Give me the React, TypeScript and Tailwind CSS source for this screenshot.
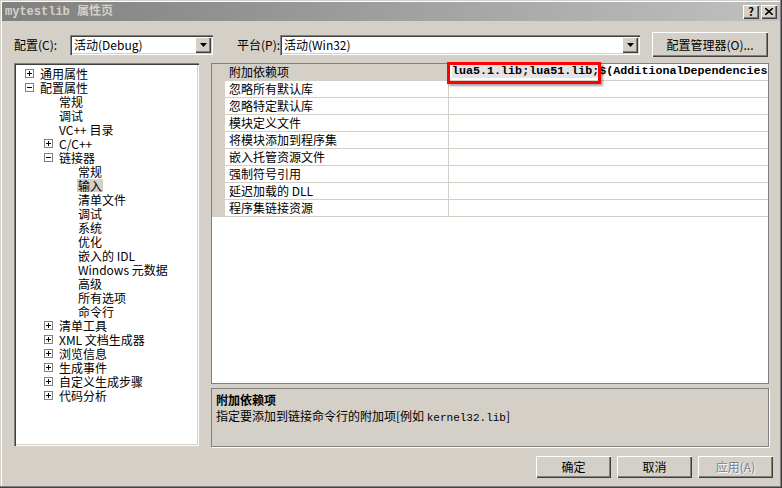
const raised = "shadow-[inset_1px_1px_0_#ffffff,inset_-1px_-1px_0_#404040,inset_-2px_-2px_0_#808080]";
const sunken = "shadow-[inset_1px_1px_0_#808080,inset_2px_2px_0_#404040,inset_-1px_-1px_0_#ffffff,inset_-2px_-2px_0_#d4d0c8]";

type Node = { label: string; level: number; box?: "+" | "-"; selected?: boolean };

const tree: Node[] = [
  { label: "通用属性", level: 0, box: "+" },
  { label: "配置属性", level: 0, box: "-" },
  { label: "常规", level: 1 },
  { label: "调试", level: 1 },
  { label: "VC++ 目录", level: 1 },
  { label: "C/C++", level: 1, box: "+" },
  { label: "链接器", level: 1, box: "-" },
  { label: "常规", level: 2 },
  { label: "输入", level: 2, selected: true },
  { label: "清单文件", level: 2 },
  { label: "调试", level: 2 },
  { label: "系统", level: 2 },
  { label: "优化", level: 2 },
  { label: "嵌入的 IDL", level: 2 },
  { label: "Windows 元数据", level: 2 },
  { label: "高级", level: 2 },
  { label: "所有选项", level: 2 },
  { label: "命令行", level: 2 },
  { label: "清单工具", level: 1, box: "+" },
  { label: "XML 文档生成器", level: 1, box: "+" },
  { label: "浏览信息", level: 1, box: "+" },
  { label: "生成事件", level: 1, box: "+" },
  { label: "自定义生成步骤", level: 1, box: "+" },
  { label: "代码分析", level: 1, box: "+" },
];

const props = [
  "附加依赖项",
  "忽略所有默认库",
  "忽略特定默认库",
  "模块定义文件",
  "将模块添加到程序集",
  "嵌入托管资源文件",
  "强制符号引用",
  "延迟加载的 DLL",
  "程序集链接资源",
];

function ExpandBox({ kind }: { kind: "+" | "-" }) {
  return (
    <svg width="9" height="9" viewBox="0 0 9 9" className="shrink-0">
      <rect x="0.5" y="0.5" width="8" height="8" fill="#fff" stroke="#808080" />
      <line x1="2" y1="4.5" x2="7" y2="4.5" stroke="#000" />
      {kind === "+" && <line x1="4.5" y1="2" x2="4.5" y2="7" stroke="#000" />}
    </svg>
  );
}

function Combo({ text, width }: { text: string; width: string }) {
  return (
    <div className={`${width} h-[20px] bg-white ${sunken} flex items-center pl-[4px] pr-[2px]`}>
      <span className="flex-1 text-[12px] leading-none">{text}</span>
      <div className={`w-[16px] h-[16px] bg-[#d4d0c8] ${raised} flex items-center justify-center`}>
        <svg width="7" height="4" viewBox="0 0 7 4">
          <polygon points="0,0 7,0 3.5,4" fill="#000" />
        </svg>
      </div>
    </div>
  );
}

function Button({ children, className = "", disabled = false }: { children: React.ReactNode; className?: string; disabled?: boolean }) {
  return (
    <div
      className={`bg-[#d4d0c8] ${raised} flex items-center justify-center text-[12px] leading-none ${
        disabled ? "text-[#808080] [text-shadow:1px_1px_0_#fff]" : "text-black"
      } ${className}`}
    >
      {children}
    </div>
  );
}

export default function App() {
  return (
    <div className="w-[782px] h-[488px] bg-[#d4d0c8] font-['Noto_Sans_CJK_SC',sans-serif] text-black shadow-[inset_-1px_-1px_0_#404040,inset_-2px_-2px_0_#808080,inset_1px_1px_0_#d4d0c8,inset_2px_2px_0_#ffffff] overflow-hidden flex flex-col">
      {/* title bar */}
      <div className="mx-[2px] mt-[2px] h-[19px] bg-gradient-to-r from-[#808080] to-[#c0c0c0] flex items-center pl-[3px] pr-[3px]">
        <span className="flex-1 text-[12px] font-bold text-[#d4d0c8] leading-none font-['Liberation_Mono','Noto_Sans_CJK_SC',monospace]">
          mytestlib 属性页
        </span>
        <div className={`w-[16px] h-[14px] bg-[#d4d0c8] ${raised} flex items-center justify-center text-[11px] font-bold leading-none`}>?</div>
        <div className={`ml-[2px] w-[16px] h-[14px] bg-[#d4d0c8] ${raised} flex items-center justify-center`}>
          <svg width="8" height="7" viewBox="0 0 8 7">
            <path d="M0 0 L8 7 M8 0 L0 7" stroke="#000" strokeWidth="1.6" />
          </svg>
        </div>
      </div>

      {/* config row */}
      <div className="mt-[11px] h-[25px] flex items-center pl-[14px]">
        <span className="w-[56px] text-[12px] leading-none">配置(C):</span>
        <Combo text="活动(Debug)" width="w-[143px]" />
        <span className="ml-[24px] w-[43px] text-[12px] leading-none whitespace-nowrap">平台(P):</span>
        <Combo text="活动(Win32)" width="w-[360px]" />
        <Button className="ml-[12px] w-[116px] h-[25px]">配置管理器(O)...</Button>
      </div>

      {/* main area */}
      <div className="mt-[6px] flex pl-[14px]">
        <div className={`w-[185px] h-[383px] bg-white ${sunken} pt-[3px] pl-[2px]`}>
          {tree.map((n, i) => (
            <div key={i} className="h-[14px] flex items-center relative">
              {n.box && (
                <div className="absolute top-[3px]" style={{ left: 9 + 19 * n.level }}>
                  <ExpandBox kind={n.box} />
                </div>
              )}
              <span
                className={`text-[12px] leading-[13px] whitespace-nowrap px-[1px] ${n.selected ? "bg-[#d4d0c8]" : ""}`}
                style={{ marginLeft: 23 + 19 * n.level }}
              >
                {n.label}
              </span>
            </div>
          ))}
        </div>

        <div className="ml-[12px] flex flex-col">
          {/* property grid */}
          <div className="w-[558px] h-[321px] bg-white border border-[#808080] relative">
            {props.map((p, i) => (
              <div key={i} className="h-[17px] flex">
                <div className="w-[13px] bg-[#d4d0c8]" />
                <div
                  className={`w-[223px] border-b border-[#d4d0c8] flex items-center pl-[4px] text-[12px] leading-none ${
                    i === 0 ? "bg-[#d4d0c8]" : ""
                  }`}
                >
                  {p}
                </div>
                <div className="flex-1 border-b border-l border-[#d4d0c8] flex items-center pl-[3px] overflow-hidden">
                  {i === 0 && (
                    <span className="text-[11.7px] font-bold leading-none whitespace-nowrap font-['Liberation_Mono',monospace]">
                      <span className="bg-[#e4e4e4]">lua5.1.lib;lua51.lib;</span>$(AdditionalDependencies
                    </span>
                  )}
                </div>
              </div>
            ))}
            <div className="absolute left-[235px] top-[-2px] w-[154px] h-[22px] border-[3px] border-[#ff0000] shadow-[2px_2px_2px_rgba(0,0,0,0.35)]" />
          </div>

          {/* description */}
          <div className="mt-[4px] w-[558px] h-[59px] border border-[#808080] shadow-[1px_1px_0_#ffffff] px-[4px] pt-[3px]">
            <div className="text-[12px] font-bold leading-[16px]">附加依赖项</div>
            <div className="text-[12px] leading-[16px] whitespace-nowrap">
              指定要添加到链接命令行的附加项[例如 <span className="font-['Liberation_Mono',monospace] text-[11px]">kernel32.lib</span>]
            </div>
          </div>
        </div>
      </div>

      {/* bottom buttons */}
      <div className="mt-[9px] flex pl-[536px] gap-[6px]">
        <Button className="w-[75px] h-[22px]">确定</Button>
        <Button className="w-[75px] h-[22px]">取消</Button>
        <Button className="w-[75px] h-[22px]" disabled>
          应用(A)
        </Button>
      </div>
    </div>
  );
}
